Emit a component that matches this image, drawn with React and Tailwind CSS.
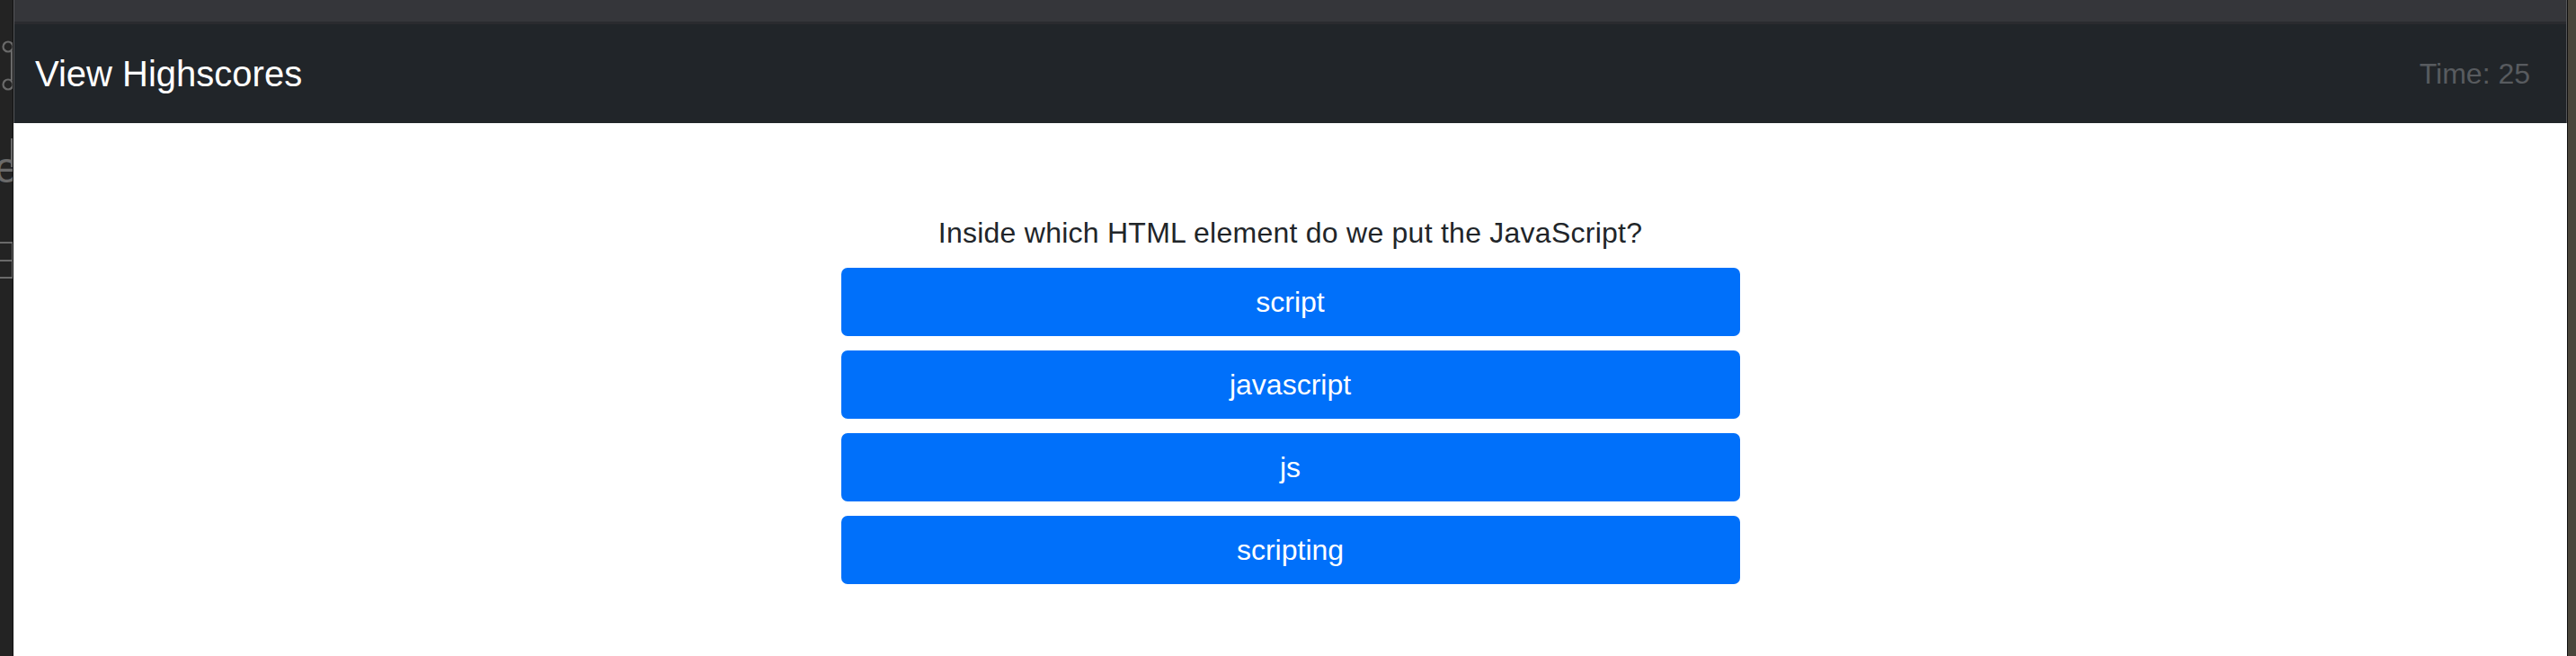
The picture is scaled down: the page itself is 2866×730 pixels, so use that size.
import { useState } from 'react'

const question = {
  title: 'Inside which HTML element do we put the JavaScript?',
  choices: ['script', 'javascript', 'js', 'scripting'],
}

function SideDock() {
  return (
    <div className="w-[15px] shrink-0 bg-[#232323] border-r border-[#111111] overflow-hidden">
      <svg width="15" height="730" viewBox="0 0 15 730" fill="none">
        {/* clipped editor icons peeking out from behind the window */}
        <circle cx="9" cy="52" r="5.5" stroke="#6a6a6a" strokeWidth="2.2" />
        <circle cx="9" cy="94" r="5.5" stroke="#6a6a6a" strokeWidth="2.2" />
        <path d="M13 57 V89" stroke="#6a6a6a" strokeWidth="2.2" />
        <text x="-6" y="203" fill="#6a6a6a" fontSize="48" fontFamily="Liberation Sans, sans-serif">
          e
        </text>
        <path d="M13 154 V186" stroke="#6a6a6a" strokeWidth="2" />
        <rect x="-2" y="270" width="16" height="39" stroke="#6a6a6a" strokeWidth="2" />
        <path d="M0 290 H14" stroke="#6a6a6a" strokeWidth="2" />
      </svg>
    </div>
  )
}

export default function App() {
  const [time] = useState(25)

  return (
    <div className="flex h-[730px] w-full overflow-hidden bg-[#232323] font-['Liberation_Sans',Arial,sans-serif]">
      <SideDock />

      <div className="flex-1 flex flex-col bg-white">
        {/* browser chrome + navbar */}
        <div className="border-x border-[#56575a]">
          <div className="h-[24px] bg-[#35363a]" />
          <nav className="h-[113px] bg-[#212529] border-t-[3px] border-[#2a2b2f] flex items-center justify-between pl-[23px] pr-[40px]">
            <a className="text-[40px] leading-[60px] text-white">View Highscores</a>
            <span className="text-[32px] leading-[48px] text-[#585b5f]">Time: {time}</span>
          </nav>
        </div>

        <main className="flex flex-col items-center pt-[98px]">
          <p className="text-[32px] leading-[48px] tracking-[0.25px] text-[#212529]">{question.title}</p>
          <div className="mt-[15px] w-[1000px] flex flex-col gap-[16px]">
            {question.choices.map((choice) => (
              <button
                key={choice}
                className="h-[76px] w-full rounded-[7px] bg-[#0070fa] text-[32px] leading-[48px] text-white"
              >
                {choice}
              </button>
            ))}
          </div>
        </main>
      </div>

      <div className="w-[10px] shrink-0 bg-[#4a453b] border-l border-[#111111]" />
    </div>
  )
}
